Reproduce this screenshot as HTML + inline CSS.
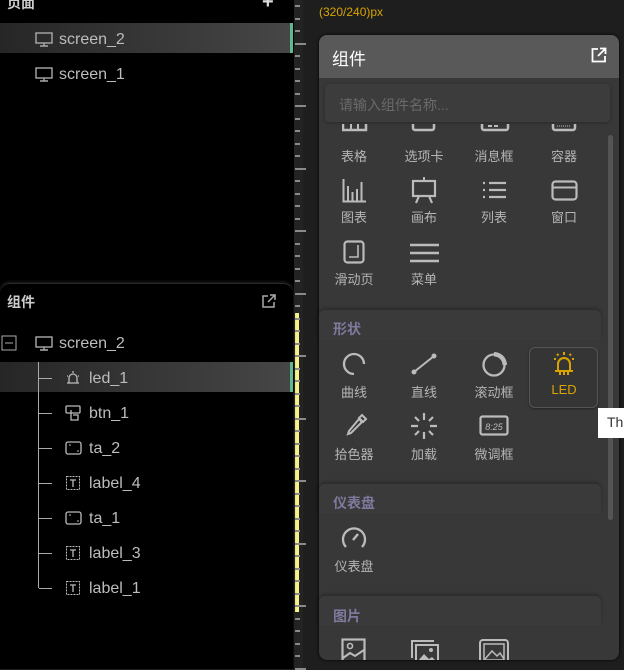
<!DOCTYPE html><html><head><meta charset="utf-8"><style>
*{margin:0;padding:0;box-sizing:border-box}
body{width:624px;height:669px;background:#1e1e1e;position:relative;overflow:hidden;font-family:"Liberation Sans","Noto Sans CJK SC",sans-serif}
.a{position:absolute}
.t{color:#bdbdbd;font-size:16px}
.lbl{position:absolute;width:70px;text-align:center;color:#b5b5b5;font-size:13px}
.ic{position:absolute}
.sec{position:absolute;left:319px;width:282px;background:#3a3a3a;border-radius:6px 6px 0 0;box-shadow:0 -2px 3px rgba(0,0,0,.25)}
.sect{position:absolute;left:333px;color:#7e7a9e;font-size:14px;font-weight:bold}
.tick{position:absolute;left:295px;height:2px;background:#8a8a8a}
</style></head><body>
<div class="a" style="left:0;top:0;width:294px;height:669px;background:#000"></div>
<div class="a" style="left:294px;top:0;width:9px;height:669px;background:#232323"></div>
<div class="a" style="left:295px;top:313px;width:4px;height:299px;background:#f7f38a"></div>
<div id="ticks"></div>
<div class="a" style="left:7px;top:-7px;color:#ccc;font-size:14px;font-weight:bold">页面</div>
<div class="a" style="left:262px;top:-9px;color:#ddd;font-size:20px;font-weight:bold">+</div>
<div class="a" style="left:0;top:23px;width:290px;height:30px;background:linear-gradient(90deg,#262626,#464646)"></div>
<div class="a" style="left:290px;top:23px;width:3px;height:30px;background:#5fb88f"></div>
<svg class="a" style="left:35px;top:32px" width="18" height="15"><rect x="1" y="1" width="16" height="10" fill="none" stroke="#aaa" stroke-width="1.4"/><path d="M9 11v3M5 14h8" stroke="#aaa" stroke-width="1.4"/></svg>
<div class="a t" style="left:59px;top:31px">screen_2</div>
<svg class="a" style="left:35px;top:67px" width="18" height="15"><rect x="1" y="1" width="16" height="10" fill="none" stroke="#aaa" stroke-width="1.4"/><path d="M9 11v3M5 14h8" stroke="#aaa" stroke-width="1.4"/></svg>
<div class="a t" style="left:59px;top:66px">screen_1</div>
<div class="a" style="left:0;top:283px;width:293px;height:386px;background:#000;border-radius:10px 10px 0 0;border-top:1px solid #2a2a2a;box-shadow:0 -1px 3px #222"></div>
<div class="a" style="left:7px;top:292px;color:#ccc;font-size:14px;font-weight:bold">组件</div>
<svg class="a" style="left:262px;top:294px" width="14" height="14"><path d="M6 2H1v11h11V8M8 1h5v5M13 1L6 8" fill="none" stroke="#aaa" stroke-width="1.5"/></svg>
<svg class="a" style="left:1px;top:335px" width="16" height="16"><rect x="1" y="1" width="14" height="14" fill="none" stroke="#aaa"/><path d="M4 8h8" stroke="#aaa"/></svg>
<svg class="a" style="left:35px;top:336px" width="18" height="15"><rect x="1" y="1" width="16" height="10" fill="none" stroke="#aaa" stroke-width="1.4"/><path d="M9 11v3M5 14h8" stroke="#aaa" stroke-width="1.4"/></svg>
<div class="a t" style="left:59px;top:335px">screen_2</div>
<div class="a" style="left:0;top:362px;width:290px;height:30px;background:linear-gradient(90deg,#262626,#464646)"></div>
<div class="a" style="left:290px;top:362px;width:3px;height:30px;background:#5fb88f"></div>
<div class="a" style="left:38px;top:362px;width:1px;height:226px;background:#aaa"></div>
<div id="tree"></div>
<div class="a" style="left:319px;top:5px;color:#d9a400;font-size:12px">(320/240)px</div>
<div class="a" style="left:319px;top:35px;width:300px;height:625px;background:#383838;border-radius:8px;box-shadow:0 0 3px #000"></div>
<div class="a" style="left:319px;top:35px;width:300px;height:43px;background:#595959;border-radius:8px 8px 0 0"></div>
<div class="a" style="left:332px;top:45px;color:#fff;font-size:17px">组件</div>
<svg class="a" style="left:591px;top:47px" width="16" height="16"><path d="M7 2H1.5v12.5H14V9M9 1.5h5.5V7M14.5 1.5L7 9" fill="none" stroke="#fff" stroke-width="1.8"/></svg>
<div class="a" style="left:325px;top:84px;width:285px;height:38px;background:#3c3c3c;border-radius:4px;box-shadow:0 1px 3px #2a2a2a"></div>
<div class="a" style="left:339px;top:95px;color:#6a6a6a;font-size:14px">请输入组件名称...</div>
<div class="a" style="left:608px;top:135px;width:5px;height:385px;background:#555;border-radius:3px"></div>
<div class="a" style="left:319px;top:124px;width:285px;height:16px;overflow:hidden">
<svg class="a" style="left:23px;top:-8px" width="26" height="20"><rect x="1" y="1" width="23" height="13" fill="none" stroke="#bbb" stroke-width="2.5"/><path d="M9 4v10M16 4v10M1 7h23" stroke="#bbb" stroke-width="2"/></svg>
<svg class="a" style="left:92px;top:-8px" width="26" height="20"><rect x="2" y="1" width="21" height="13" rx="2" fill="none" stroke="#bbb" stroke-width="2.5"/></svg>
<svg class="a" style="left:161px;top:-8px" width="30" height="20"><rect x="2" y="1" width="26" height="13" rx="2" fill="none" stroke="#bbb" stroke-width="2.5"/><path d="M8 10h4M14 10h4" stroke="#bbb" stroke-width="2"/></svg>
<svg class="a" style="left:232px;top:-8px" width="26" height="20"><rect x="2" y="1" width="22" height="13" rx="2" fill="none" stroke="#bbb" stroke-width="2.5"/><path d="M6 10h14" stroke="#bbb" stroke-dasharray="1 1"/></svg>
</div>
<div class="lbl" style="left:319px;top:146px">表格</div><div class="lbl" style="left:389px;top:146px">选项卡</div><div class="lbl" style="left:459px;top:146px">消息框</div><div class="lbl" style="left:529px;top:146px">容器</div>
<svg class="ic" style="left:342px;top:178px" width="25" height="25"><path d="M1.5 1v22.5H24M6 23V8M10.5 23V14M15 23V11M19.5 23V4" stroke="#bbb" stroke-width="2" fill="none"/></svg>
<svg class="ic" style="left:411px;top:176px" width="26" height="28"><path d="M13 1v4" stroke="#bbb" stroke-width="2"/><rect x="2" y="5" width="22" height="15" fill="none" stroke="#bbb" stroke-width="2.2"/><path d="M5 27l3-7M21 27l-3-7" stroke="#bbb" stroke-width="2.2"/></svg>
<svg class="ic" style="left:482px;top:181px" width="25" height="20"><path d="M1 2h2M1 9h2M1 16h2M7 2h17M7 9h17M7 16h17" stroke="#bbb" stroke-width="2.2"/></svg>
<svg class="ic" style="left:551px;top:180px" width="27" height="21"><rect x="1.5" y="1.5" width="24" height="18" rx="3" fill="none" stroke="#bbb" stroke-width="2.2"/><path d="M1.5 7.5h24" stroke="#bbb" stroke-width="2"/></svg>
<div class="lbl" style="left:319px;top:207px">图表</div><div class="lbl" style="left:389px;top:207px">画布</div><div class="lbl" style="left:459px;top:207px">列表</div><div class="lbl" style="left:529px;top:207px">窗口</div>
<svg class="ic" style="left:343px;top:240px" width="22" height="24"><rect x="1.5" y="1.5" width="19" height="21" rx="3" fill="none" stroke="#bbb" stroke-width="2.2"/><path d="M6 17h9V5" stroke="#bbb" stroke-width="1.6" fill="none"/></svg>
<svg class="ic" style="left:410px;top:243px" width="29" height="20"><path d="M0 2h29M0 10h29M0 18h29" stroke="#bbb" stroke-width="2.5"/></svg>
<div class="lbl" style="left:319px;top:269px">滑动页</div><div class="lbl" style="left:389px;top:269px">菜单</div>
<div class="sec" style="top:310px;height:30px"></div>
<div class="sect" style="top:319px">形状</div>
<div class="a" style="left:529px;top:347px;width:69px;height:61px;background:#353535;border:1.5px solid #555;border-radius:6px;box-shadow:0 1px 2px #222"></div>
<svg class="ic" style="left:340px;top:350px" width="28" height="28"><path d="M14 24A10 10 0 1 1 24 14" fill="none" stroke="#bbb" stroke-width="2.3"/></svg>
<svg class="ic" style="left:410px;top:352px" width="28" height="24"><circle cx="4" cy="20" r="2.5" fill="#bbb"/><circle cx="24" cy="4" r="2.5" fill="#bbb"/><path d="M4 20L24 4" stroke="#bbb" stroke-width="2"/></svg>
<svg class="ic" style="left:480px;top:350px" width="30" height="30"><circle cx="14" cy="15" r="10.5" fill="none" stroke="#bbb" stroke-width="2.3" stroke-dasharray="60 2 3 2"/><path d="M14 2A13 13 0 0 1 27 15h-4.5A8.5 8.5 0 0 0 14 6.5z" fill="#bbb"/></svg>
<svg class="ic" style="left:551px;top:351px" width="26" height="26"><path d="M7 20v-7a6 6 0 0 1 12 0v7M4 20h18M9 20v4M13 20v4M17 20v4M13 1v3M3 8h2M21 8h2M6 3l1.5 1.5M20 3l-1.5 1.5" fill="none" stroke="#d9a400" stroke-width="2"/></svg>
<div class="lbl" style="left:319px;top:382px">曲线</div><div class="lbl" style="left:389px;top:382px">直线</div><div class="lbl" style="left:459px;top:382px">滚动框</div><div class="lbl" style="left:529px;top:382px;color:#d9a400">LED</div>
<svg class="ic" style="left:344px;top:413px" width="24" height="26"><path d="M18 2l4 4-3 3-4-4zM15 6l3 3-11 11-3 1 1-3z" fill="none" stroke="#bbb" stroke-width="2"/></svg>
<svg class="ic" style="left:410px;top:412px" width="28" height="28"><g stroke="#bbb" stroke-width="2.2"><path d="M14 1v7M14 20v7M1 14h7M20 14h7M5 5l4 4M19 19l4 4M23 5l-4 4M5 23l4-4"/></g></svg>
<svg class="ic" style="left:479px;top:415px" width="30" height="22"><rect x="1.5" y="1.5" width="27" height="18" rx="2" fill="none" stroke="#bbb" stroke-width="2.2"/><text x="15" y="15" font-size="9" fill="#bbb" text-anchor="middle" font-style="italic" font-family="Liberation Sans">8:25</text></svg>
<div class="lbl" style="left:319px;top:444px">拾色器</div><div class="lbl" style="left:389px;top:444px">加载</div><div class="lbl" style="left:459px;top:444px">微调框</div>
<div class="sec" style="top:484px;height:30px"></div>
<div class="sect" style="top:493px">仪表盘</div>
<svg class="ic" style="left:340px;top:524px" width="28" height="26"><path d="M6 23A11 11 0 1 1 22 23" fill="none" stroke="#bbb" stroke-width="2.3"/><path d="M13 16l5-6" stroke="#bbb" stroke-width="2.5"/></svg>
<div class="lbl" style="left:319px;top:556px">仪表盘</div>
<div class="sec" style="top:596px;height:30px"></div>
<div class="sect" style="top:606px">图片</div>
<div class="a" style="left:319px;top:630px;width:285px;height:30px;overflow:hidden">
<svg class="a" style="left:22px;top:8px" width="26" height="26"><rect x="1.5" y="1.5" width="22" height="24" fill="none" stroke="#bbb" stroke-width="2.2"/><circle cx="9" cy="8" r="2.5" fill="none" stroke="#bbb" stroke-width="1.6"/><path d="M2 20l7-5 5 3 9-6" fill="none" stroke="#bbb" stroke-width="2"/></svg>
<svg class="a" style="left:90px;top:8px" width="32" height="26"><path d="M3 20V3h22" fill="none" stroke="#bbb" stroke-width="2"/><rect x="7" y="7" width="22" height="18" fill="none" stroke="#bbb" stroke-width="2"/><path d="M8 24l7-8 5 5 3-2 5 5z" fill="#bbb"/><circle cx="22" cy="12" r="2" fill="#bbb"/></svg>
<svg class="a" style="left:158px;top:7px" width="34" height="26"><rect x="3" y="3" width="28" height="22" rx="3" fill="none" stroke="#bbb" stroke-width="2"/><rect x="7" y="7" width="20" height="16" fill="none" stroke="#bbb" stroke-width="1.5"/><path d="M8 22l7-8 5 5 3-3 4 6" fill="none" stroke="#bbb" stroke-width="1.5"/></svg>
</div>
<div class="a" style="left:598px;top:408px;width:26px;height:30px;background:#fff"></div>
<div class="a" style="left:607px;top:414px;color:#333;font-size:14px">Th</div>
<script>
var h='';for(var y=5;y<669;y+=12.5){var w=(Math.round((y-5)/12.5)%5==3)?11:5;h+='<div class="tick" style="top:'+Math.round(y)+'px;width:'+w+'px"></div>';}
document.getElementById('ticks').innerHTML=h;
var items=[['led_1','led'],['btn_1','btn'],['ta_2','ta'],['label_4','lb'],['ta_1','ta'],['label_3','lb'],['label_1','lb']];
var ic={led:'<path d="M4 13V8a4 4 0 0 1 8 0v5M2 13h12M8 1v2M2 6h1M13 6h1" fill="none" stroke="#bbb" stroke-width="1.3"/>',
btn:'<rect x="1" y="1" width="14" height="7" rx="1" fill="none" stroke="#bbb" stroke-width="1.3"/><path d="M6 5v10h7v-5H8" fill="none" stroke="#bbb" stroke-width="1.3"/>',
ta:'<rect x="1" y="2" width="15" height="12" rx="2" fill="none" stroke="#bbb" stroke-width="1.3"/><path d="M4 5h2M12 11h2" stroke="#bbb"/>',
lb:'<rect x="1.5" y="1.5" width="13" height="13" fill="none" stroke="#bbb" stroke-dasharray="2 1"/><path d="M5 5h6M8 5v7" stroke="#bbb" stroke-width="1.3"/>'};
var t='';items.forEach(function(it,i){var y=378+i*35;t+='<div class="a" style="left:39px;top:'+y+'px;width:13px;height:1px;background:#aaa"></div><svg class="a" style="left:65px;top:'+(y-8)+'px" width="17" height="16">'+ic[it[1]]+'</svg><div class="a t" style="left:89px;top:'+(y-8)+'px">'+it[0]+'</div>';});
document.getElementById('tree').innerHTML=t;
</script>
</body></html>
